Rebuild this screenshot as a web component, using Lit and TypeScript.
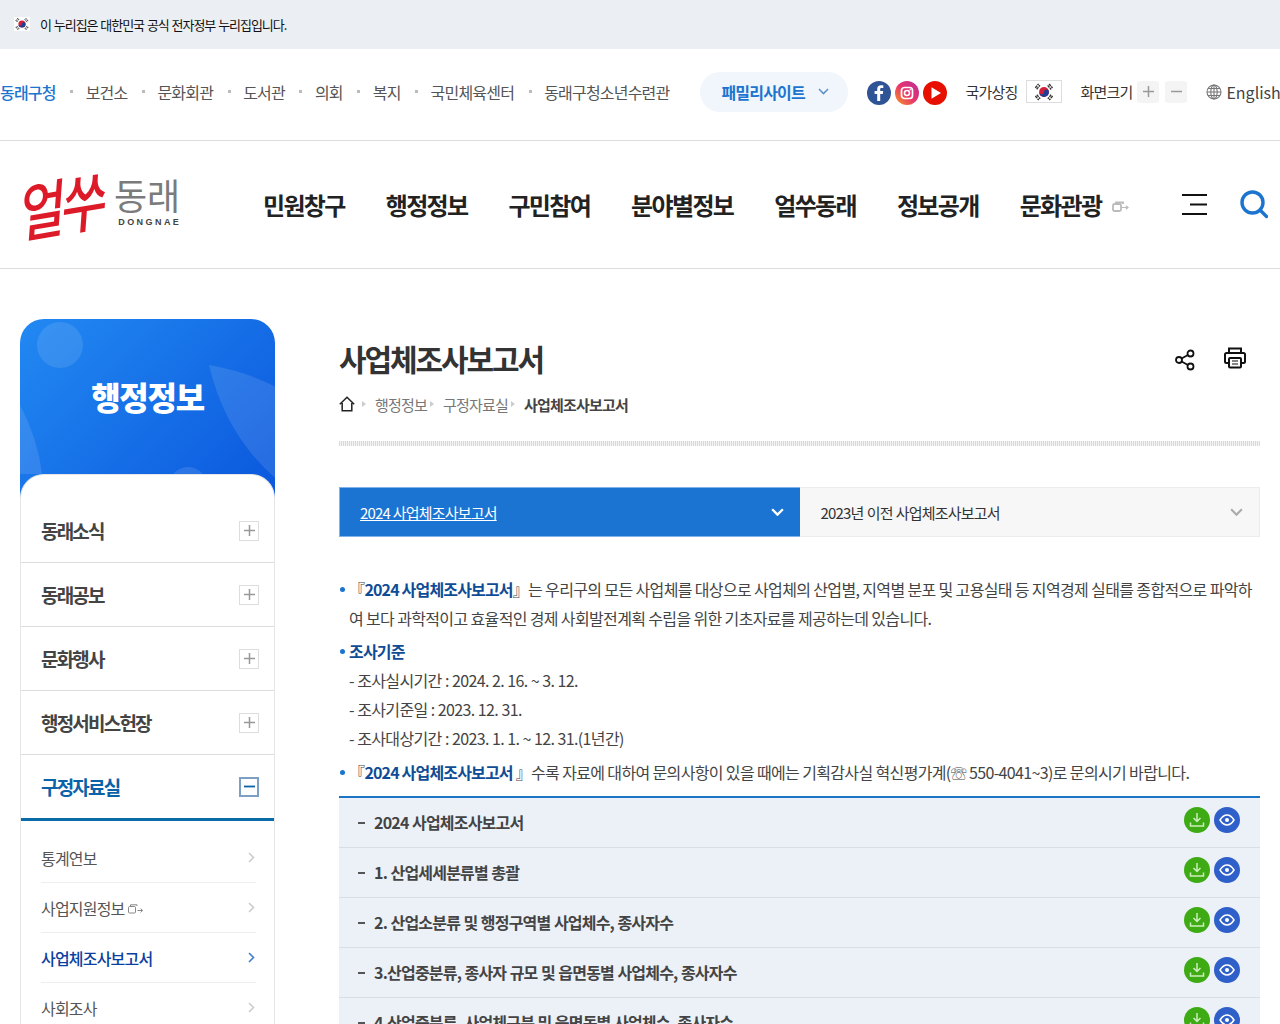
import { LitElement, html, css } from "lit";
import { customElement } from "lit/decorators.js";

const flag = (s: number) => html`<svg width=${s} height=${s} viewBox="0 0 24 24" aria-hidden="true">
  <circle cx="12" cy="12" r="5.4" fill="#d3203a"/>
  <path d="M6.6 12a5.4 5.4 0 0 0 10.8 0a2.7 2.7 0 0 0-5.4 0a2.7 2.7 0 0 1-5.4 0z" fill="#1f3f95"/>
  <g stroke="#333" stroke-width="1.5" stroke-dasharray="3 .8">
    <path d="M2.5 7.5l3.6-4.4M4 9l3.6-4.4"/><path d="M17.5 3.2l3.8 4.4M16 4.8l3.8 4.4"/>
    <path d="M2.6 16.4l3.6 4.4M4.2 15l3.6 4.4"/><path d="M19.8 15l-3.6 4.4M21.4 16.4l-3.6 4.4"/>
  </g></svg>`;

const ext = (c: string) => html`<svg class="ext" width="16" height="10" viewBox="0 0 16 10" fill="none" stroke=${c} stroke-width="1">
  <rect x=".5" y="2.5" width="7" height="6.5" rx="1"/><path d="M2.5 2.5V.8h6.5V2"/><path d="M9.5 6.5h5M12.6 4.6l2 1.9-2 1.9"/></svg>`;

const chevD = (c: string, w = 12, sw = 2) => html`<svg width=${w} height=${w * 0.66} viewBox="0 0 12 8" fill="none" stroke=${c} stroke-width=${sw}><path d="M1 1.2l5 5 5-5"/></svg>`;
const chevR = (c: string) => html`<svg class="chev" width="7" height="11" viewBox="0 0 7 11" fill="none" stroke=${c} stroke-width="1.6"><path d="M1 1l4.5 4.5L1 10"/></svg>`;

const topLinks = ["보건소", "문화회관", "도서관", "의회", "복지", "국민체육센터", "동래구청소년수련관"];
const gnb = ["민원창구", "행정정보", "구민참여", "분야별정보", "얼쑤동래", "정보공개", "문화관광"];
const side = ["동래소식", "동래공보", "문화행사", "행정서비스헌장"];
const rows = [
  "2024 사업체조사보고서",
  "1. 산업세세분류별 총괄",
  "2. 산업소분류 및 행정구역별 사업체수, 종사자수",
  "3.산업중분류, 종사자 규모 및 읍면동별 사업체수, 종사자수",
  "4.산업중분류, 사업체구분 및 읍면동별 사업체수, 종사자수",
];

@customElement("app-root")
export class AppRoot extends LitElement {
  static styles = css`
    :host { display: block; height: 1024px; overflow: hidden; background: #fff; color: #333; white-space: nowrap;
      font-family: "Noto Sans CJK KR", "Noto Sans", sans-serif; letter-spacing: -0.05em; }
    * { box-sizing: border-box; }
    a { color: inherit; text-decoration: none; }
    ul { list-style: none; margin: 0; padding: 0; }
    svg { display: block; flex: none; }

    .gov { height: 49px; background: #ebeff3; display: flex; align-items: center; padding-left: 14px; gap: 10px;
      font-size: 13px; color: #111; letter-spacing: -0.08em; word-spacing: 1px; }
    .gov .f { width: 16px; height: 14px; background: #fff; display: flex; align-items: center; margin-top: -2px; }

    .util { height: 92px; border-bottom: 1px solid #dcdcdc; display: flex; align-items: center; font-size: 16px; color: #555; padding-bottom: 6px; }
    .links { display: flex; flex: none; }
    .links li { display: flex; align-items: center; }
    .links li + li::before { content: ""; width: 3px; height: 3px; background: #bbb; margin: 0 13.5px; position: relative; left: 1px; }
    .links .on { color: #1b75cf; font-weight: 500; }
    .fam { margin-left: 31px; width: 148px; height: 40px; border-radius: 20px; background: #f0f6fc; display: flex; align-items: center; flex: none;
      padding-left: 21px; gap: 13px; color: #1b75cf; font-weight: 700; font-size: 16px; }
    .sns { display: flex; margin: 2px 0 0 19px; gap: 4px; }
    .sym { margin-left: 18px; display: flex; align-items: center; color: #333; font-size: 15px; gap: 9px; }
    .flagbox { width: 36px; height: 23px; border: 1px solid #ddd; display: flex; align-items: center; justify-content: center; }
    .zoom { margin-left: 18px; display: flex; align-items: center; color: #333; font-size: 15px; }
    .zoom b { width: 22px; height: 22px; background: #f4f4f4; border-radius: 3px; margin-left: 5px; display: flex; align-items: center; justify-content: center; }
    .zoom b + b { margin-left: 6px; }
    .lang { margin-left: 19px; display: flex; align-items: center; gap: 4px; font-size: 16px; letter-spacing: 0; color: #444; white-space: nowrap; }

    .head { height: 128px; border-bottom: 1px solid #dcdcdc; display: flex; align-items: center; }
    .logo { margin-left: 22px; width: 158px; height: 66px; display: flex; align-items: center; flex: none; }
    .brush { font-weight: 500; font-size: 48px; letter-spacing: -0.07em; color: #dc1a28; flex: none; margin-top: -6px;
      transform: skewX(-14deg) rotate(-10deg) scaleY(1.35); width: 92px; line-height: 1; }
    .lt { display: flex; flex-direction: column; align-items: flex-end; flex: 1; color: #7b7b7b; margin-top: -8px; }
    .lt strong { font-size: 36px; font-weight: 400; line-height: 38px; letter-spacing: 0; }
    .lt span { font-size: 9px; font-weight: 700; letter-spacing: 0.27em; color: #444; font-family: "Liberation Sans", sans-serif; margin: 4px -1px 0 0; }
    .gnb { display: flex; gap: 41px; margin-left: 83px; font-size: 24px; font-weight: 700; color: #222; align-items: center; flex: none; letter-spacing: -0.069em; }
    .gnb .x { margin: 4px 0 0 -30px; }
    .burger { margin-left: 53px; }
    .search { margin-left: 33px; }

    .body { display: flex; padding: 50px 20px 0; gap: 64px; align-items: flex-start; }
    aside { width: 255px; flex: none; }
    .hero { height: 180px; border-radius: 24px 24px 0 0; background: linear-gradient(135deg, #2289f2, #0b57dd); position: relative; overflow: hidden;
      color: #fff; font-size: 32px; font-weight: 900; text-align: center; padding-top: 55px; line-height: 44px; letter-spacing: -0.04em; }
    .hero svg { position: absolute; left: 0; top: 0; }
    .hero span { position: relative; }
    .snb { margin-top: -25px; position: relative; background: #fff; border: 1px solid #e6e6e6; border-bottom: 0; border-radius: 24px 24px 0 0; padding-top: 24px; }
    .snb > li { height: 64px; border-bottom: 1px solid #ddd; display: flex; align-items: center; justify-content: space-between; padding: 0 15px 0 20px;
      font-size: 19px; font-weight: 700; color: #444; letter-spacing: -0.095em; }
    .box { width: 20px; height: 20px; border: 1px solid #ddd; display: flex; align-items: center; justify-content: center; }
    .snb > li.on { height: 66px; border-bottom: 3px solid #0b6aa8; color: #0b62a8; }
    .on .box { border: 2px solid #7ba0c4; }
    .snb > li.subwrap { display: block; height: auto; border: 0; padding: 0; font-size: 16px; font-weight: 400; letter-spacing: -0.05em; }
    .sub { padding: 12px 18px 0 20px; }
    .sub li { height: 50px; border-bottom: 1px solid #eee; display: flex; align-items: center; font-size: 16px; color: #555; }
    .sub li .t { flex: 1; display: flex; align-items: center; gap: 3px; }
    .sub li.cur { color: #0b3fa0; font-weight: 500; }
    .chev { margin-right: 1px; }
    .ext { margin-top: 3px; }

    main { flex: 1; min-width: 0; }
    .ttl { display: flex; align-items: center; height: 60px; margin-top: 9px; }
    h1 { flex: 1; margin: 0; font-size: 30px; font-weight: 700; color: #333; letter-spacing: -0.07em; line-height: 60px; }
    .tools { display: flex; margin-right: 14px; align-items: center; }
    .tools .sh { margin: 4px 29px 0 0; }
    .bc { display: flex; align-items: center; font-size: 15px; color: #777; height: 30px; margin-top: 1px; }
    .bc i { width: 0; height: 0; border-left: 4px solid #ccc; border-top: 3px solid transparent; border-bottom: 3px solid transparent; margin: 0 9px 0 3px; }
    .bc i.h { margin-left: 7px; }
    .bc b { color: #444; font-weight: 700; }
    .dots { height: 5px; margin-top: 22px; background: repeating-linear-gradient(90deg, #d9d9d9 0 1px, #f4f4f4 1px 2px); }
    .tabs { display: flex; margin-top: 41px; height: 50px; font-size: 15px; }
    .tab { width: 50%; display: flex; align-items: center; justify-content: space-between; padding: 0 16px 0 20px; }
    .tab.a { background: #1b74d2; color: #fff; border: 1px solid #7fb2e8; border-right: 0; }
    .tab.a span { text-decoration: underline; }
    .tab.b { background: #f7f7f7; color: #333; border: 1px solid #ececec; border-left: 0; padding-left: 21px; word-spacing: 0.5px; }
    .txt { margin-top: 38px; font-size: 16px; line-height: 29px; color: #444; letter-spacing: -0.04em; white-space: normal; }
    .txt p { margin: 0; }
    .bl { position: relative; padding-left: 10px; }
    .bl::before { content: ""; position: absolute; left: 1px; top: 12px; width: 5px; height: 5px; border-radius: 50%; background: #1b75cf; }
    .bl b { color: #0f4c96; font-weight: 700; letter-spacing: -0.052em; }
    .bl2 { margin-top: 4px !important; }
    .ind { padding-left: 10px; word-spacing: 0.3px; }
    .bl3 { margin-top: 5px !important; }
    .list { margin-top: 9px; border-top: 2px solid #1b75c4; }
    .list li { height: 50px; background: #ecf1f8; border-bottom: 1px solid #d9dee5; display: flex; align-items: center; padding: 0 20px 0 19px; font-size: 16px; font-weight: 700; color: #444; word-spacing: 0.6px; }
    .list .d { width: 7px; height: 2px; background: #555; margin-right: 9px; }
    .list .n { flex: 1; padding-bottom: 2px; }
    .bt { width: 26px; height: 26px; border-radius: 50%; display: flex; align-items: center; justify-content: center; margin-top: -6px; }
    .bt.g { background: #3eaa14; margin-right: 4px; }
    .bt.v { background: #2f5fc9; }
  `;

  render() {
    return html`
      <div class="gov"><span class="f">${flag(16)}</span><span>이 누리집은 대한민국 공식 전자정부 누리집입니다.</span></div>

      <div class="util">
        <ul class="links">
          <li><a class="on">동래구청</a></li>
          ${topLinks.map((t) => html`<li><a>${t}</a></li>`)}
        </ul>
        <a class="fam">패밀리사이트 ${chevD("#5b8fc4", 11, 1.6)}</a>
        <div class="sns">
          <svg width="24" height="24" viewBox="0 0 24 24"><circle cx="12" cy="12" r="12" fill="#2f5496"/><path d="M13.2 20v-7h2.6l.4-2.9h-3V8.400c0-.9.3-1.400 1.500-1.400h1.600V4.400c-.3 0-1.200-.1-2.300-.1-2.300 0-3.800 1.400-3.800 3.800v2H7.600V13h2.600v7z" fill="#fff"/></svg>
          <svg width="24" height="24" viewBox="0 0 24 24"><defs><linearGradient id="ig" x1="0" y1="1" x2="1" y2="0"><stop offset="0" stop-color="#f79a1e"/><stop offset=".5" stop-color="#e8336e"/><stop offset="1" stop-color="#b5309a"/></linearGradient></defs><circle cx="12" cy="12" r="12" fill="url(#ig)"/><rect x="6.500" y="6.500" width="11" height="11" rx="3" fill="none" stroke="#fff" stroke-width="1.700"/><circle cx="12" cy="12" r="2.500" fill="none" stroke="#fff" stroke-width="1.600"/><circle cx="15.200" cy="8.800" r=".8" fill="#fff"/></svg>
          <svg width="24" height="24" viewBox="0 0 24 24"><circle cx="12" cy="12" r="12" fill="#e60f00"/><path d="M8.500 6.200L18 12l-9.500 5.800z" fill="#fff"/></svg>
        </div>
        <div class="sym">국가상징 <span class="flagbox">${flag(22)}</span></div>
        <div class="zoom">화면크기
          <b><svg width="11" height="11" viewBox="0 0 11 11" stroke="#999" stroke-width="1.500"><path d="M5.500 0v11M0 5.500h11"/></svg></b>
          <b><svg width="11" height="11" viewBox="0 0 11 11" stroke="#999" stroke-width="1.500"><path d="M0 5.500h11"/></svg></b>
        </div>
        <div class="lang">
          <svg width="16" height="16" viewBox="0 0 16 16" fill="none" stroke="#777" stroke-width="1.100"><circle cx="8" cy="8" r="7"/><ellipse cx="8" cy="8" rx="3.200" ry="7"/><path d="M1 8h14M2 4.500h12M2 11.500h12M8 1v14"/></svg>
          English
        </div>
      </div>

      <div class="head">
        <div class="logo">
          <span class="brush">얼쑤</span>
          <div class="lt"><strong>동래</strong><span>DONGNAE</span></div>
        </div>
        <nav class="gnb">
          ${gnb.map((g) => html`<a>${g}</a>`)}
          <span class="x"><svg width="17" height="11" viewBox="0 0 17 11" fill="none" stroke="#bbb" stroke-width="1.800"><rect x="1" y="3" width="8" height="7" rx="1.500"/><path d="M4 3V1.500h7V3"/><path d="M10 6.500h6M14 4.800l2 1.700-2 1.700" stroke-width="1.200"/></svg></span>
        </nav>
        <svg class="burger" width="25" height="21" viewBox="0 0 25 21" stroke="#111" stroke-width="2"><path d="M0 1h25M8 10.500h17M0 20h25"/></svg>
        <svg class="search" width="28" height="29" viewBox="0 0 28 29" fill="none" stroke="#1b75cf" stroke-width="3.400"><circle cx="12.500" cy="12.500" r="10.500"/><path d="M20 20l6.500 6.500" stroke-linecap="round"/></svg>
      </div>

      <div class="body">
        <aside>
          <div class="hero">
            <svg width="256" height="180" viewBox="0 0 256 180" fill="#fff" fill-opacity=".11">
              <circle cx="40" cy="26" r="23"/>
              <path d="M189 46Q225 52 256 68V160Q205 115 189 46z"/>
              <path d="M0 86Q18 120 22 155H0z"/>
              <circle cx="168" cy="167" r="19"/>
            </svg>
            <span>행정정보</span>
          </div>
          <ul class="snb">
            ${side.map((s) => html`<li><span>${s}</span><span class="box"><svg width="11" height="11" viewBox="0 0 11 11" stroke="#999" stroke-width="1.500"><path d="M5.500 0v11M0 5.500h11"/></svg></span></li>`)}
            <li class="on"><span>구정자료실</span><span class="box"><svg width="11" height="11" viewBox="0 0 11 11" stroke="#0b62a8" stroke-width="1.800"><path d="M0 5.500h11"/></svg></span></li>
            <li class="subwrap"><ul class="sub">
              <li><span class="t">통계연보</span>${chevR("#ccc")}</li>
              <li><span class="t">사업지원정보 ${ext("#888")}</span>${chevR("#ccc")}</li>
              <li class="cur"><span class="t">사업체조사보고서</span>${chevR("#3f7fd0")}</li>
              <li><span class="t">사회조사</span>${chevR("#ccc")}</li>
            </ul></li>
          </ul>
        </aside>

        <main>
          <div class="ttl">
            <h1>사업체조사보고서</h1>
            <div class="tools">
              <svg class="sh" width="20" height="22" viewBox="0 0 20 22" fill="none" stroke="#111" stroke-width="1.800"><circle cx="4" cy="11" r="3"/><circle cx="15.500" cy="4.500" r="3"/><circle cx="15.500" cy="17.500" r="3"/><path d="M6.600 9.500l6.300-3.500M6.600 12.500l6.300 3.500"/></svg>
              <svg width="22" height="22" viewBox="0 0 22 22" fill="none" stroke="#111" stroke-width="2"><path d="M5 6V1.500h12V6"/><path d="M5 16H2.500A1.500 1.500 0 0 1 1 14.500v-7A1.500 1.500 0 0 1 2.500 6h17A1.500 1.500 0 0 1 21 7.500v7a1.500 1.500 0 0 1-1.500 1.500H17"/><rect x="5" y="11" width="12" height="9.500" rx="1"/><path d="M8 14h6M8 17h6" stroke-width="1.200"/></svg>
            </div>
          </div>
          <div class="bc">
            <svg width="16" height="16" viewBox="0 0 16 16" fill="none" stroke="#222" stroke-width="1.500"><path d="M.8 8.200L8 1.200l7.200 7M3.200 7v7.800h9.600V7"/></svg>
            <i class="h"></i><span>행정정보</span><i></i><span>구정자료실</span><i></i><b>사업체조사보고서</b>
          </div>
          <div class="dots"></div>
          <div class="tabs">
            <a class="tab a"><span>2024 사업체조사보고서</span>${chevD("#fff", 13, 2.2)}</a>
            <a class="tab b"><span>2023년 이전 사업체조사보고서</span>${chevD("#aaa", 13, 2)}</a>
          </div>
          <div class="txt">
            <p class="bl">『<b>2024 사업체조사보고서</b>』는 우리구의 모든 사업체를 대상으로 사업체의 산업별, 지역별 분포 및 고용실태 등 지역경제 실태를 종합적으로 파악하여 보다 과학적이고 효율적인 경제 사회발전계획 수립을 위한 기초자료를 제공하는데 있습니다.</p>
            <p class="bl bl2"><b>조사기준</b></p>
            <p class="ind">- 조사실시기간 : 2024. 2. 16. ~ 3. 12.</p>
            <p class="ind">- 조사기준일 : 2023. 12. 31.</p>
            <p class="ind">- 조사대상기간 : 2023. 1. 1. ~ 12. 31.(1년간)</p>
            <p class="bl bl3">『<b>2024 사업체조사보고서</b> 』수록 자료에 대하여 문의사항이 있을 때에는 기획감사실 혁신평가계(☏ 550-4041~3)로 문의시기 바랍니다.</p>
          </div>
          <ul class="list">
            ${rows.map((r) => html`<li><span class="d"></span><span class="n">${r}</span>
              <a class="bt g"><svg width="16" height="16" viewBox="0 0 16 16" fill="none" stroke="#cdeebc" stroke-width="1.500"><path d="M8 1v8M4.500 6L8 9.500 11.500 6M1.500 10.500v3.500h13v-3.500"/></svg></a>
              <a class="bt v"><svg width="16" height="12" viewBox="0 0 16 12" fill="none" stroke="#fff" stroke-width="1.500"><path d="M1 6c2-3.200 4.300-5 7-5s5 1.800 7 5c-2 3.200-4.300 5-7 5S3 9.200 1 6z"/><circle cx="8" cy="6" r="2" fill="#fff" stroke="none"/></svg></a></li>`)}
          </ul>
        </main>
      </div>
    `;
  }
}
